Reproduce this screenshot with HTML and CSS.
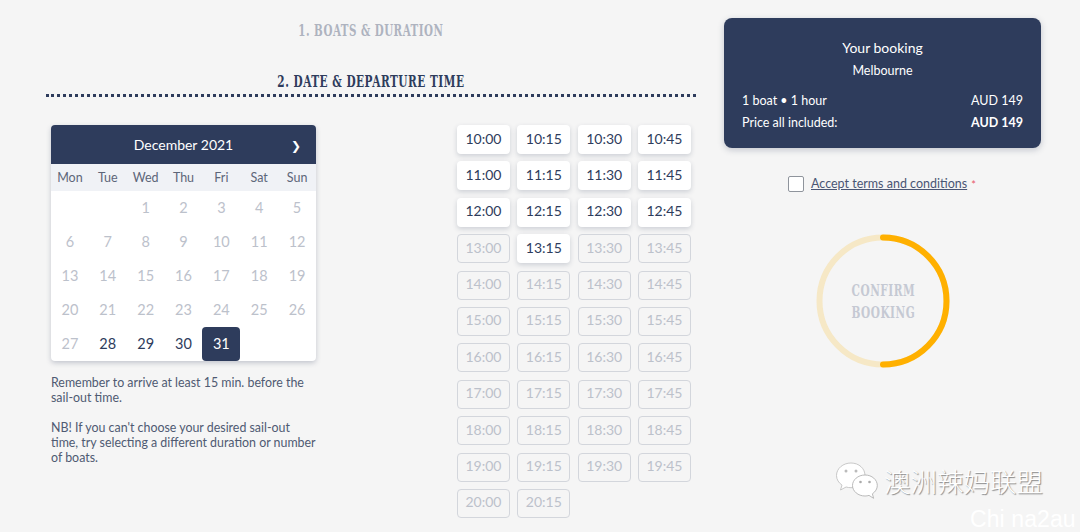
FILE: index.html
```html
<!DOCTYPE html>
<html lang="en">
<head>
    <meta charset="UTF-8">
    <title>Booking</title>
    <link rel="stylesheet" href="styles.css">
</head>
<body>
    <div class="page">
        <div class="steps">
            <h2 class="step-title step-done"><span class="slab">1. Boats &amp; duration</span></h2>
            <h2 class="step-title step-active"><span class="slab">2. Date &amp; departure time</span></h2>

            <div class="step-body">
                <div class="date-col">
                    <div class="calendar">
                        <div class="cal-head">
                            <span>December 2021</span>
                            <span class="cal-next">&#10095;</span>
                        </div>
                        <div class="cal-days">
                            <span>Mon</span><span>Tue</span><span>Wed</span><span>Thu</span><span>Fri</span><span>Sat</span><span>Sun</span>
                        </div>
                        <div class="cal-grid">
                            <span></span><span></span><span>1</span><span>2</span><span>3</span><span>4</span><span>5</span>
                            <span>6</span><span>7</span><span>8</span><span>9</span><span>10</span><span>11</span><span>12</span>
                            <span>13</span><span>14</span><span>15</span><span>16</span><span>17</span><span>18</span><span>19</span>
                            <span>20</span><span>21</span><span>22</span><span>23</span><span>24</span><span>25</span><span>26</span>
                            <span>27</span><span class="open">28</span><span class="open">29</span><span class="open">30</span><span class="selected">31</span>
                        </div>
                    </div>
                    <p class="note">Remember to arrive at least 15 min. before the sail-out time.</p>
                    <p class="note">NB! If you can't choose your desired sail-out time, try selecting a different duration or number of boats.</p>
                </div>

                <div class="times">
                    <button class="time">10:00</button><button class="time">10:15</button><button class="time">10:30</button><button class="time">10:45</button>
                    <button class="time">11:00</button><button class="time">11:15</button><button class="time">11:30</button><button class="time">11:45</button>
                    <button class="time">12:00</button><button class="time">12:15</button><button class="time">12:30</button><button class="time">12:45</button>
                    <button class="time off">13:00</button><button class="time">13:15</button><button class="time off">13:30</button><button class="time off">13:45</button>
                    <button class="time off">14:00</button><button class="time off">14:15</button><button class="time off">14:30</button><button class="time off">14:45</button>
                    <button class="time off">15:00</button><button class="time off">15:15</button><button class="time off">15:30</button><button class="time off">15:45</button>
                    <button class="time off">16:00</button><button class="time off">16:15</button><button class="time off">16:30</button><button class="time off">16:45</button>
                    <button class="time off">17:00</button><button class="time off">17:15</button><button class="time off">17:30</button><button class="time off">17:45</button>
                    <button class="time off">18:00</button><button class="time off">18:15</button><button class="time off">18:30</button><button class="time off">18:45</button>
                    <button class="time off">19:00</button><button class="time off">19:15</button><button class="time off">19:30</button><button class="time off">19:45</button>
                    <button class="time off">20:00</button><button class="time off">20:15</button>
                </div>
            </div>
        </div>

        <div class="summary">
            <div class="booking-card">
                <div class="booking-title">Your booking</div>
                <div class="booking-place">Melbourne</div>
                <div class="booking-row"><span>1 boat &bull; 1 hour</span><span>AUD 149</span></div>
                <div class="booking-row"><span>Price all included:</span><strong>AUD 149</strong></div>
            </div>

            <label class="terms">
                <span class="checkbox"></span>
                <a href="#">Accept terms and conditions</a>
                <span class="required">*</span>
            </label>

            <div class="confirm">
                <svg class="confirm-ring" viewBox="0 0 134 134">
                    <circle cx="67" cy="67" r="63.5" fill="none" stroke="#f6e8c6" stroke-width="6"/>
                    <path d="M67 3.5a63.5 63.5 0 0 1 0 127" fill="none" stroke="#ffb000" stroke-width="6" stroke-linecap="round"/>
                </svg>
                <span class="confirm-text slab">Confirm<br>booking</span>
            </div>
        </div>
    </div>

    <div class="watermark">
        <svg class="wechat" viewBox="0 0 44 38">
            <path d="M16 1C8 1 1.500 6.500 1.500 13.500c0 4 2.200 7.300 5.500 9.600L5.500 28l5.600-3c1.500.4 3.200.7 4.900.7 7.500 0 14-5.300 14-12.200S24 1 16 1z" fill="#fff" stroke="#bbb" stroke-width=".8"/>
            <path d="M30 13c-7 0-12.500 4.800-12.500 10.500S23 34 30 34c1.400 0 2.800-.2 4-.6l4.600 2.900-1.200-4.500c3-2 4.900-5 4.900-8.300C42.300 17.800 37 13 30 13z" fill="#fff" stroke="#aaa" stroke-width=".8"/>
            <circle cx="11" cy="9" r="1.500" fill="#bbb"/><circle cx="21" cy="9" r="1.500" fill="#bbb"/>
            <circle cx="25.500" cy="20" r="1.300" fill="#aaa"/><circle cx="34.500" cy="20" r="1.300" fill="#aaa"/>
        </svg>
        <span class="wm-name">澳洲辣妈联盟</span>
    </div>
    <div class="wm-site">Chi na2au</div>
</body>
</html>
```

FILE: styles.css
```css
* {
    margin: 0;
    padding: 0;
    box-sizing: border-box;
}

body {
    font-family: 'Lato', 'Open Sans', sans-serif;
    color: #2e3c5c;
    background-color: #f5f5f5;
    height: 532px;
    overflow: hidden;
    position: relative;
}

.page {
    display: flex;
    gap: 28px;
    padding-left: 46px;
}

.steps {
    width: 650px;
}

/* squeezed slab caps, no condensed slab face is installed */
.slab {
    display: inline-block;
    font-family: 'DejaVu Serif', serif;
    font-size: 17px;
    font-weight: 700;
    line-height: 22px;
    letter-spacing: 0.8px;
    text-transform: uppercase;
    white-space: nowrap;
    transform: scaleX(0.62);
}

.step-title {
    text-align: center;
    white-space: nowrap;
    font-size: 17px;
    line-height: 22px;
}

.step-done {
    color: #aeb3bf;
    padding-top: 19px;
}

.step-done .slab {
    transform: scaleX(0.605);
}

.step-active {
    margin-top: 29px;
    padding-bottom: 2px;
    border-bottom: 3px dotted #2e3c5c;
}

.step-body {
    display: flex;
    justify-content: space-between;
    padding: 28px 5px 0;
}

/* calendar */
.date-col {
    width: 265px;
}

.calendar {
    background-color: #fff;
    border-radius: 4px;
    box-shadow: 0 2px 5px rgba(46, 60, 92, 0.25);
    overflow: hidden;
}

.cal-head {
    height: 39px;
    background-color: #2e3c5c;
    color: #fff;
    font-size: 14px;
    position: relative;
    display: flex;
    align-items: center;
    justify-content: center;
}

.cal-next {
    position: absolute;
    right: 15px;
    top: 13px;
    font-size: 12px;
}

.cal-days {
    height: 27px;
    background-color: #f0f2f6;
    display: grid;
    grid-template-columns: repeat(7, 1fr);
    align-items: center;
    text-align: center;
    font-size: 12.5px;
    color: #5d6679;
}

.cal-grid {
    display: grid;
    grid-template-columns: repeat(7, 1fr);
    grid-auto-rows: 34px;
    font-size: 14.5px;
    color: #bcc1cb;
    text-align: center;
    line-height: 33px;
}

.cal-grid .open {
    color: #2e3c5c;
}

.cal-grid .selected {
    background-color: #2e3c5c;
    color: #fff;
    border-radius: 4px;
}

.note {
    font-size: 12.4px;
    line-height: 15px;
    color: #4f5a72;
    margin-top: 14px;
    margin-right: -4px;
}

.note + .note {
    margin-top: 15px;
}

/* departure times */
.times {
    width: 234px;
    display: grid;
    grid-template-columns: repeat(4, 53px);
    grid-auto-rows: 29px;
    justify-content: space-between;
    row-gap: 7.4px;
    align-content: start;
}

.time {
    font-family: inherit;
    font-size: 14px;
    padding-bottom: 3px;
    color: #2e3c5c;
    background-color: #fff;
    border: none;
    border-radius: 4px;
    box-shadow: 0 2px 5px rgba(46, 60, 92, 0.2);
}

.time.off {
    color: #bcc1cb;
    background-color: transparent;
    border: 1px solid #d3d6dc;
    box-shadow: none;
}

/* right column */
.summary {
    width: 317px;
    padding-top: 18px;
}

.booking-card {
    height: 130px;
    padding: 21px 18px 0;
    background-color: #2e3c5c;
    color: #fff;
    border-radius: 8px;
    box-shadow: 0 2px 6px rgba(46, 60, 92, 0.25);
    font-size: 12.5px;
}

.booking-title {
    font-size: 14px;
    line-height: 18px;
    text-align: center;
}

.booking-place {
    line-height: 16px;
    margin-top: 6px;
    margin-bottom: 11px;
    text-align: center;
}

.booking-row {
    display: flex;
    justify-content: space-between;
    line-height: 22px;
}

.terms {
    display: flex;
    align-items: center;
    height: 16px;
    margin-top: 28px;
    padding-left: 64px;
    font-size: 12.5px;
}

.checkbox {
    width: 16px;
    height: 16px;
    margin-right: 7px;
    background-color: #fff;
    border: 1px solid #8f949c;
    border-radius: 2px;
}

.terms a {
    color: #4a5674;
    margin-bottom: 2px;
}

.required {
    color: #e8596a;
    margin-left: 4px;
    font-size: 11px;
}

.confirm {
    position: relative;
    width: 134px;
    height: 134px;
    margin: 42px 0 0 92px;
    display: flex;
    align-items: center;
    justify-content: center;
}

.confirm-ring {
    position: absolute;
    left: 0;
    top: 0;
    width: 134px;
    height: 134px;
}

.confirm-text {
    text-align: center;
    color: #c5c9d3;
}

/* image watermark */
.watermark {
    position: absolute;
    left: 835px;
    top: 462px;
    display: flex;
    align-items: center;
    gap: 5px;
}

.wechat {
    width: 44px;
    height: 38px;
}

.wm-name {
    font-family: 'Noto Sans CJK SC', sans-serif;
    font-size: 26.5px;
    font-weight: 300;
    line-height: 38px;
    color: #fff;
    text-shadow: 1px 1px 1px #888;
}

.wm-site {
    position: absolute;
    left: 970px;
    top: 505px;
    font-family: 'Liberation Sans', sans-serif;
    font-size: 23px;
    letter-spacing: 0.1px;
    line-height: 28px;
    color: #fff;
}
```
